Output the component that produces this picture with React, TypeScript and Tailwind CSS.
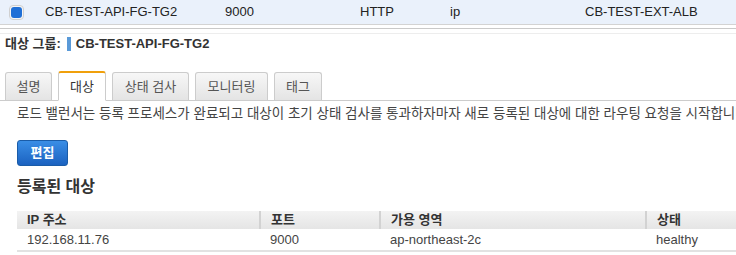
import React from 'react'

const tabs = [
  { label: '설명', w: 'w-[47px]' },
  { label: '대상', w: 'w-[48px]', active: true },
  { label: '상태 검사', w: 'w-[77px]' },
  { label: '모니터링', w: 'w-[73px]' },
  { label: '태그', w: 'w-[48px]' },
]

const targets = [
  { ip: '192.168.11.76', port: '9000', zone: 'ap-northeast-2c', status: 'healthy' },
]

export default function App() {
  return (
    <div className="w-[736px] h-[255px] overflow-hidden bg-white text-[13px] text-[#444] font-['Liberation_Sans','Noto_Sans_CJK_KR',sans-serif]">
      {/* selected row of the target group list */}
      <div className="flex items-center h-[25px] bg-[#eaf1fb] border-b border-[#d3d3d3] text-[#222] whitespace-nowrap">
        <div className="w-[45px] pl-[9px] flex items-center">
          <div className="w-[15px] h-[15px] rounded-[4px] border border-[#d0d0d0] bg-[#f4f4f4] p-[1px]">
            <div className="w-full h-full rounded-[3px] bg-[#1f6fd6]" />
          </div>
        </div>
        <div className="w-[180px]">CB-TEST-API-FG-TG2</div>
        <div className="w-[135px]">9000</div>
        <div className="w-[90px]">HTTP</div>
        <div className="w-[135px]">ip</div>
        <div>CB-TEST-EXT-ALB</div>
      </div>

      {/* splitter */}
      <div className="mt-[3px] h-[6px] border-t border-[#c9c9c9] border-b border-b-[#ededed]" />

      <div className="h-[20px] flex items-center pl-[5px] font-bold text-[#333] text-[13px]">
        <span>대상 그룹:</span>
        <span className="ml-[6px] mr-[5px] w-[4px] h-[14px] bg-[#5a9ad8]" />
        <span>CB-TEST-API-FG-TG2</span>
      </div>

      {/* tabs */}
      <div className="mt-[17px] flex items-end gap-[6px] pl-[5px] h-[30px] border-b border-[#cccccc]">
        {tabs.map((t) =>
          t.active ? (
            <div
              key={t.label}
              className={`${t.w} h-[30px] -mb-px flex items-center justify-center bg-white border border-[#cccccc] border-b-white border-t-2 border-t-[#f0a00c] rounded-t-[3px] text-[#333]`}
            >
              {t.label}
            </div>
          ) : (
            <div
              key={t.label}
              className={`${t.w} h-[28px] flex items-center justify-center bg-linear-to-b from-[#f7f7f7] to-[#e4e4e4] border border-b-0 border-[#cccccc] rounded-t-[3px] text-[#555]`}
            >
              {t.label}
            </div>
          )
        )}
      </div>

      <div className="pl-[17px] whitespace-nowrap">
        <p className="mt-[3px] leading-[20px] text-[13.5px]">
          로드 밸런서는 등록 프로세스가 완료되고 대상이 초기 상태 검사를 통과하자마자 새로 등록된 대상에 대한 라우팅 요청을 시작합니다.
        </p>

        <button className="mt-[16px] w-[51px] h-[26px] rounded-[3px] border border-[#1a5ca8] bg-linear-to-b from-[#3a8ee6] to-[#1b62c0] text-white font-bold text-[13px] flex items-center justify-center">
          편집
        </button>

        <h3 className="mt-[12px] h-[18px] leading-[18px] text-[16px] font-bold text-[#333]">등록된 대상</h3>

        <table className="mt-[15px] w-[760px] border-collapse text-left">
          <thead>
            <tr className="h-[18px] bg-linear-to-b from-[#f3f3f3] to-[#e5e5e5] text-[#333]">
              <th className="w-[243px] pl-[10px] py-0 font-bold leading-[18px]">IP 주소</th>
              <th className="w-[120px] pl-[10px] py-0 font-bold leading-[18px] border-l-2 border-[#d2d2d2]">포트</th>
              <th className="w-[266px] pl-[10px] py-0 font-bold leading-[18px] border-l-2 border-[#d2d2d2]">가용 영역</th>
              <th className="pl-[10px] py-0 font-bold leading-[18px] border-l-2 border-[#d2d2d2]">상태</th>
            </tr>
          </thead>
          <tbody>
            {targets.map((r) => (
              <tr key={r.ip} className="h-[22px] border-b-2 border-[#e2e2e2]">
                <td className="pl-[10px]">{r.ip}</td>
                <td className="pl-[10px]">{r.port}</td>
                <td className="pl-[10px]">{r.zone}</td>
                <td className="pl-[10px]">{r.status}</td>
              </tr>
            ))}
          </tbody>
        </table>
      </div>
    </div>
  )
}
